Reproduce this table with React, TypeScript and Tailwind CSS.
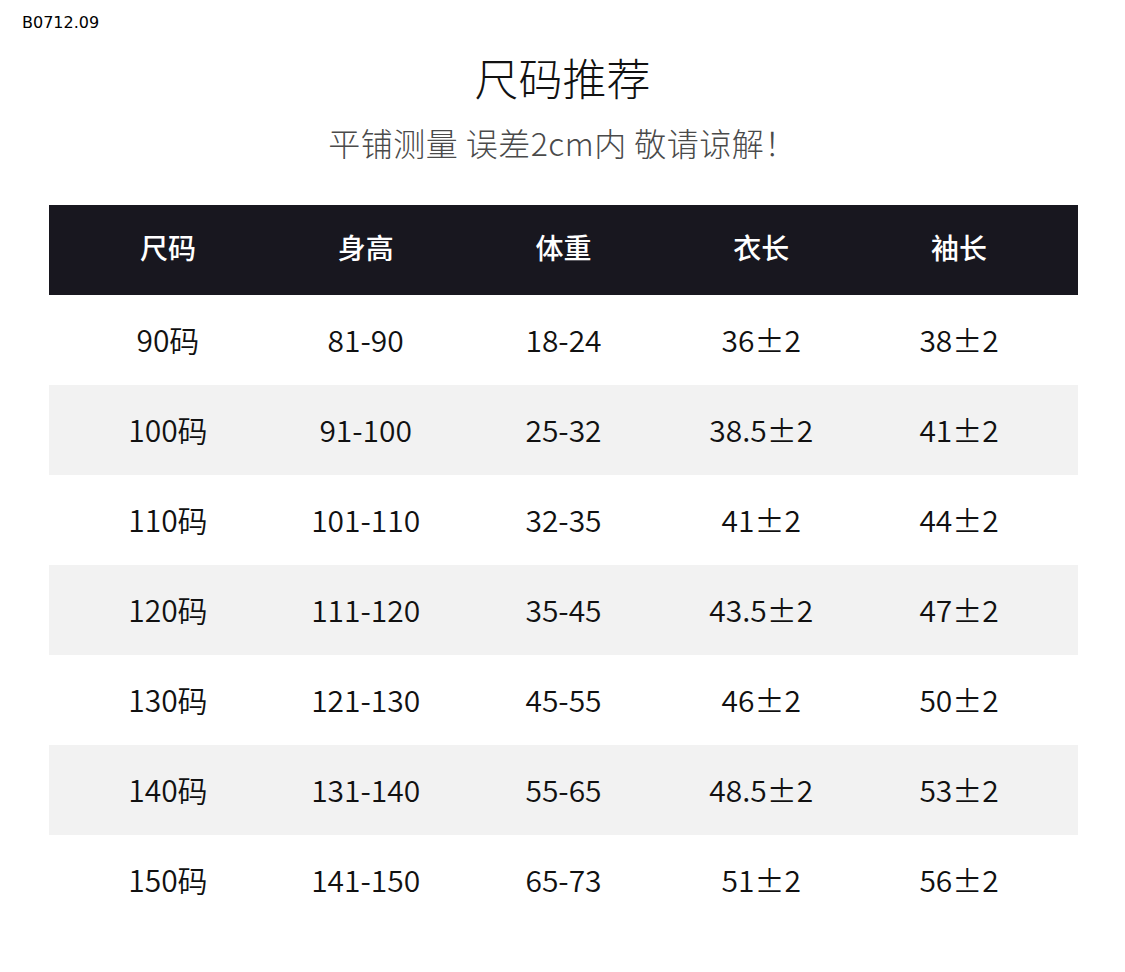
import React from "react";

const rows = [
  ["90码", "81-90", "18-24", "36±2", "38±2"],
  ["100码", "91-100", "25-32", "38.5±2", "41±2"],
  ["110码", "101-110", "32-35", "41±2", "44±2"],
  ["120码", "111-120", "35-45", "43.5±2", "47±2"],
  ["130码", "121-130", "45-55", "46±2", "50±2"],
  ["140码", "131-140", "55-65", "48.5±2", "53±2"],
  ["150码", "141-150", "65-73", "51±2", "56±2"],
];

const headers = ["尺码", "身高", "体重", "衣长", "袖长"];

export default function App() {
  return (
    <main
      className="w-[1125px] h-[972px] bg-white text-[#1a1a1a] relative"
      style={{ fontFamily: '"Noto Sans CJK SC", "Noto Sans", sans-serif' }}
    >
      {/* code label */}
      <div className="absolute left-[22px] top-[13px] text-[16px] leading-[20px] text-black" style={{ fontFamily: '"DejaVu Sans", sans-serif' }}>
        B0712.09
      </div>

      {/* Title */}
      <div className="pt-[50px] flex flex-col items-center">
        <h1 className="text-[44px] leading-[54px] font-light text-[#111]">尺码推荐</h1>
        <p className="mt-[18px] text-[32px] leading-[40px] font-light text-[#4a4a4a] tracking-[0.5px]">
          平铺测量 误差2cm内 敬请谅解！
        </p>
      </div>

      {/* Table */}
      <div className="mt-[43px] mx-[49px] w-[1029px]">
        <div className="h-[90px] bg-[#18171f] px-[20px] grid grid-cols-5 items-center">
          {headers.map((h) => (
            <div key={h} className="text-center text-white text-[28px] font-medium leading-none pb-[6px]">
              {h}
            </div>
          ))}
        </div>
        {rows.map((r, i) => (
          <div
            key={r[0]}
            className={
              "h-[90px] px-[20px] grid grid-cols-5 items-center " +
              (i % 2 === 1 ? "bg-[#f2f2f2]" : "bg-white")
            }
          >
            {r.map((c, j) => (
              <div key={j} className="text-center text-[30px] font-[350] leading-none text-[#111] pb-[2px]">
                {c}
              </div>
            ))}
          </div>
        ))}
      </div>
    </main>
  );
}
